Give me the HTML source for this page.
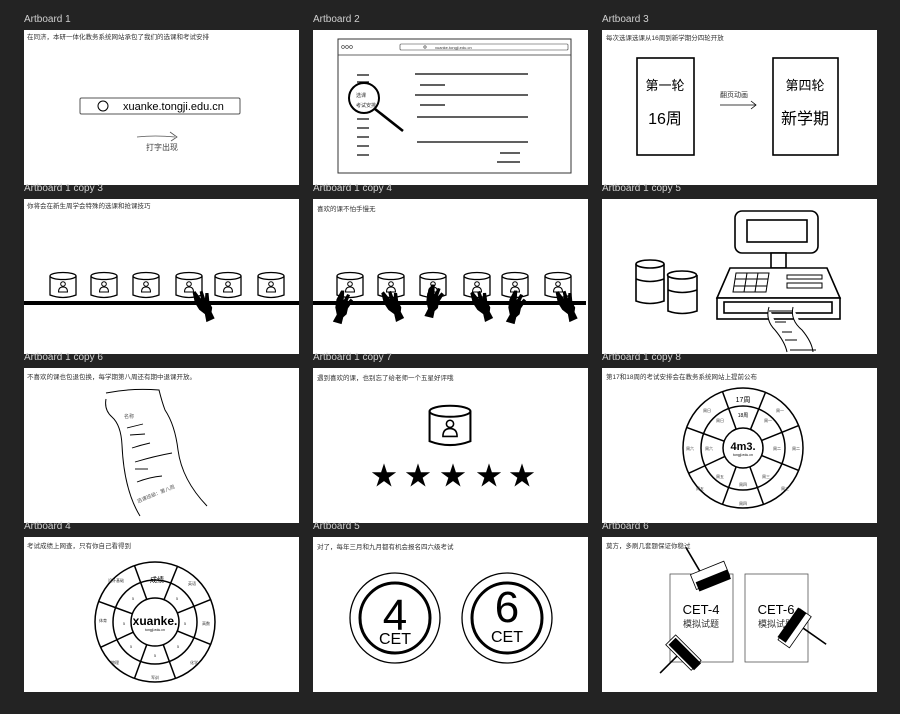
<!DOCTYPE html>
<html><head><meta charset="utf-8"><style>
html,body{margin:0;padding:0;background:#232323;}
svg{display:block;}
text{font-family:"Liberation Sans","Noto Sans CJK SC",sans-serif;}
.lbl{fill:#d0d0d0;font-size:10px;}
.cap{fill:#333;font-size:6.5px;}
</style></head><body>
<svg width="900" height="714" viewBox="0 0 900 714" xmlns="http://www.w3.org/2000/svg">
<defs>
<symbol id="cyl" viewBox="0 0 28 28" overflow="visible">
<g fill="#fff" stroke="#000" stroke-width="1.3">
<path d="M1 4 L1 23 Q14 28 27 23 L27 4"/>
<ellipse cx="14" cy="4" rx="13" ry="3.5"/>
</g>
<circle cx="14" cy="12" r="2.3" fill="none" stroke="#000" stroke-width="1"/>
<path d="M9.5 20 Q9.5 15 14 15 Q18.5 15 18.5 20 Z" fill="none" stroke="#000" stroke-width="1"/>
</symbol>
<symbol id="hand" viewBox="0 0 20 34" overflow="visible">
<path d="M3 2 L6 1 L9 10 L10 3 L13 3 L13 11 L15 6 L18 7 L16 16 L17 22 L15 26 L16 33 L7 34 L8 26 L4 20 L2 12 Z" fill="#000"/>
</symbol>
</defs>

<g fill="#fff">
<rect x="24" y="30" width="275" height="155"/><rect x="313" y="30" width="275" height="155"/><rect x="602" y="30" width="275" height="155"/>
<rect x="24" y="199" width="275" height="155"/><rect x="313" y="199" width="275" height="155"/><rect x="602" y="199" width="275" height="155"/>
<rect x="24" y="368" width="275" height="155"/><rect x="313" y="368" width="275" height="155"/><rect x="602" y="368" width="275" height="155"/>
<rect x="24" y="537" width="275" height="155"/><rect x="313" y="537" width="275" height="155"/><rect x="602" y="537" width="275" height="155"/>
</g>

<!-- Board 1 -->
<text class="cap" x="27" y="39">在同济，本研一体化教务系统网站承包了我们的选课和考试安排</text>
<rect x="80" y="98" width="160" height="16" rx="1.5" fill="none" stroke="#555" stroke-width="1"/>
<circle cx="103" cy="106" r="5" fill="none" stroke="#000" stroke-width="1"/>
<text x="123" y="110" font-size="11" fill="#000">xuanke.tongji.edu.cn</text>
<path d="M137 137 Q155 135 175 137 M170 132 L177 137 L171 141" fill="none" stroke="#555" stroke-width="0.8"/>
<text x="146" y="150" font-size="8" fill="#444">打字出现</text>

<!-- Board 2 -->
<rect x="338" y="39" width="233" height="134" fill="none" stroke="#333" stroke-width="1"/>
<line x1="338" y1="55" x2="571" y2="55" stroke="#333" stroke-width="0.8"/>
<g fill="none" stroke="#333" stroke-width="0.6"><circle cx="343" cy="47" r="1.4"/><circle cx="347" cy="47" r="1.4"/><circle cx="351" cy="47" r="1.4"/>
<rect x="400" y="44" width="168" height="6" rx="1"/><circle cx="425" cy="47" r="1.2"/></g>
<text x="435" y="49" font-size="4" fill="#333">xuanke.tongji.edu.cn</text>
<g stroke="#000" stroke-width="1.2">
<line x1="357" y1="75" x2="369" y2="75"/><line x1="357" y1="82" x2="369" y2="82"/>
<line x1="357" y1="119" x2="369" y2="119"/><line x1="357" y1="128" x2="369" y2="128"/><line x1="357" y1="137" x2="369" y2="137"/><line x1="357" y1="146" x2="369" y2="146"/><line x1="357" y1="155" x2="369" y2="155"/>
<line x1="415" y1="74" x2="528" y2="74"/><line x1="420" y1="85" x2="445" y2="85"/><line x1="415" y1="95" x2="528" y2="95"/><line x1="420" y1="105" x2="445" y2="105"/><line x1="417" y1="117" x2="528" y2="117"/><line x1="417" y1="142" x2="528" y2="142"/><line x1="500" y1="153" x2="520" y2="153"/><line x1="497" y1="162" x2="520" y2="162"/>
</g>
<circle cx="364" cy="98" r="15" fill="none" stroke="#000" stroke-width="2"/>
<line x1="375" y1="109" x2="403" y2="131" stroke="#000" stroke-width="2.6"/>
<text x="356" y="97" font-size="5" fill="#333">选课</text>
<text x="356" y="107" font-size="5" fill="#333">考试安排</text>

<!-- Board 3 -->
<text class="cap" x="606" y="40">每次选课选课从16周到新学期分四轮开放</text>
<rect x="637" y="58" width="57" height="97" fill="none" stroke="#000" stroke-width="1.6"/>
<text x="665" y="90" font-size="13" text-anchor="middle" fill="#000">第一轮</text>
<text x="665" y="124" font-size="16" text-anchor="middle" fill="#000">16周</text>
<text x="720" y="97" font-size="7" fill="#333">翻页动画</text>
<path d="M720 105 L756 105 M751 101 L756 105 L751 109" fill="none" stroke="#000" stroke-width="0.8"/>
<rect x="773" y="58" width="65" height="97" fill="none" stroke="#000" stroke-width="1.6"/>
<text x="805" y="90" font-size="13" text-anchor="middle" fill="#000">第四轮</text>
<text x="805" y="124" font-size="16" text-anchor="middle" fill="#000">新学期</text>

<!-- Board 4 -->
<text class="cap" x="27" y="208">你将会在新生周学会特殊的选课和抢课技巧</text>
<use href="#cyl" x="49" y="272" width="28" height="28"/><use href="#cyl" x="90" y="272" width="28" height="28"/><use href="#cyl" x="132" y="272" width="28" height="28"/>
<use href="#cyl" x="175" y="272" width="28" height="28"/><use href="#cyl" x="214" y="272" width="28" height="28"/><use href="#cyl" x="257" y="272" width="28" height="28"/>
<rect x="24" y="301" width="275" height="4" fill="#000"/>
<use href="#hand" x="194" y="288" width="20" height="34" transform="rotate(-18 204 305)"/>

<!-- Board 5 -->
<text class="cap" x="317" y="211">喜欢的课不怕手慢无</text>
<use href="#cyl" x="336" y="272" width="28" height="28"/><use href="#cyl" x="377" y="272" width="28" height="28"/><use href="#cyl" x="419" y="272" width="28" height="28"/>
<use href="#cyl" x="463" y="272" width="28" height="28"/><use href="#cyl" x="501" y="272" width="28" height="28"/><use href="#cyl" x="544" y="272" width="28" height="28"/>
<rect x="313" y="301" width="273" height="4" fill="#000"/>
<use href="#hand" x="332" y="290" width="20" height="34" transform="rotate(22 342 307)"/>
<use href="#hand" x="383" y="288" width="20" height="34" transform="rotate(-20 393 305)"/>
<use href="#hand" x="422" y="284" width="22" height="34" transform="rotate(20 433 301)"/>
<use href="#hand" x="472" y="288" width="20" height="34" transform="rotate(-20 482 305)"/>
<use href="#hand" x="505" y="290" width="20" height="34" transform="rotate(22 515 307)"/>
<use href="#hand" x="557" y="288" width="20" height="34" transform="rotate(-18 567 305)"/>

<!-- Board 6 -->
<g fill="#fff" stroke="#000" stroke-width="1.6">
<path d="M636 264 L636 301 Q650 306 664 301 L664 264"/><ellipse cx="650" cy="264" rx="14" ry="4"/><path d="M636 279 Q650 284 664 279"/>
<path d="M668 275 L668 311 Q682 316 697 311 L697 275"/><ellipse cx="682" cy="275" rx="14.5" ry="4"/><path d="M668 290 Q682 295 697 290"/>
<rect x="735" y="211" width="83" height="42" rx="7"/>
<rect x="747" y="220" width="60" height="22"/>
<rect x="771" y="253" width="15" height="15"/>
<path d="M730 268 L827 268 L840 298 L717 298 Z"/>
<rect x="717" y="298" width="123" height="21"/>
<rect x="724" y="302" width="108" height="11"/>
</g>
<g fill="none" stroke="#000" stroke-width="1">
<path d="M736 273 L769 273 L766 292 L733 292 Z M735 279 L768 279 M734 286 L767 286 M747 273 L744 292 M758 273 L755 292"/>
<rect x="787" y="275" width="35" height="4"/><rect x="787" y="283" width="35" height="5"/>
</g>
<path d="M769 307 Q765 320 775 330 Q785 342 787 352 M793 307 Q790 320 802 330 Q812 342 813 352 M769 311 L793 311 M775 322 L786 322 M782 332 L792 332 M785 340 L797 340 M790 350 L816 350" fill="#fff" stroke="#000" stroke-width="1"/>

<!-- Board 7 -->
<text class="cap" x="27" y="379">不喜欢的课也包退包换，每学期第八周还有期中退课开放。</text>
<path d="M106 393 Q130 388 159 390 Q162 402 165 410 Q175 425 178 450 Q182 480 207 506 M106 399 Q104 410 112 417 Q121 425 122 445 Q124 490 140 516" fill="none" stroke="#000" stroke-width="1"/>
<g stroke="#000" stroke-width="0.9" fill="none">
<path d="M127 428 Q135 426 143 424"/><path d="M130 435 L145 434"/><path d="M132 448 Q141 445 150 443"/><path d="M135 462 Q155 456 172 453"/><path d="M135 469 L148 469"/><path d="M137 482 Q150 477 162 476"/>
</g>
<text x="124" y="418" font-size="5" fill="#555">名称</text>
<text x="138" y="503" font-size="5" fill="#555" transform="rotate(-22 138 503)">选课班级：第八周</text>

<!-- Board 8 -->
<text class="cap" x="317" y="380">遇到喜欢的课，也别忘了给老师一个五星好评哦</text>
<use href="#cyl" x="428" y="405" width="44" height="44"/>
<g fill="#000" font-size="26" text-anchor="middle">
<text x="384" y="485">★</text><text x="418" y="485">★</text><text x="453" y="485">★</text><text x="489" y="485">★</text><text x="522" y="485">★</text>
</g>

<!-- Board 9 -->
<text class="cap" x="606" y="379">第17和18周的考试安排会在教务系统网站上提前公布</text>
<g transform="translate(743 448)" fill="none" stroke="#000" stroke-width="1.5">
<circle r="60"/><circle r="42"/><circle r="20"/>
<line y1="-42" y2="-60" transform="rotate(-20)"/><line y1="-42" y2="-60" transform="rotate(22)"/><line y1="-42" y2="-60" transform="rotate(68)"/><line y1="-42" y2="-60" transform="rotate(112)"/><line y1="-42" y2="-60" transform="rotate(160)"/><line y1="-42" y2="-60" transform="rotate(200)"/><line y1="-42" y2="-60" transform="rotate(245)"/><line y1="-42" y2="-60" transform="rotate(290)"/>
<line y1="-20" y2="-42" transform="rotate(-20)"/><line y1="-20" y2="-42" transform="rotate(22)"/><line y1="-20" y2="-42" transform="rotate(68)"/><line y1="-20" y2="-42" transform="rotate(112)"/><line y1="-20" y2="-42" transform="rotate(160)"/><line y1="-20" y2="-42" transform="rotate(200)"/><line y1="-20" y2="-42" transform="rotate(245)"/><line y1="-20" y2="-42" transform="rotate(290)"/>
</g>
<text x="743" y="402" font-size="7" text-anchor="middle" fill="#000">17周</text>
<text x="743" y="417" font-size="5" text-anchor="middle" fill="#000">18周</text>
<text x="743" y="450" font-size="11" font-weight="bold" text-anchor="middle" fill="#000">4m3.</text>
<text x="743" y="456" font-size="3.5" text-anchor="middle" fill="#000">tongji.edu.cn</text>
<g font-size="4" fill="#333" text-anchor="middle">
<text x="707" y="412">周日</text><text x="780" y="412">周一</text><text x="796" y="450">周二</text><text x="690" y="450">周六</text><text x="700" y="490">周五</text><text x="785" y="490">周三</text><text x="743" y="505">周四</text>
<text x="720" y="422">周日</text><text x="768" y="422">周一</text><text x="777" y="450">周二</text><text x="709" y="450">周六</text><text x="720" y="478">周五</text><text x="766" y="478">周三</text><text x="743" y="486">周四</text>
</g>

<!-- Board 10 -->
<text class="cap" x="27" y="548">考试成绩上网查，只有你自己看得到</text>
<g transform="translate(155 622)" fill="none" stroke="#000" stroke-width="1.5">
<circle r="60"/><circle r="42"/><circle r="24"/>
<line y1="-42" y2="-60" transform="rotate(-20)"/><line y1="-42" y2="-60" transform="rotate(22)"/><line y1="-42" y2="-60" transform="rotate(68)"/><line y1="-42" y2="-60" transform="rotate(112)"/><line y1="-42" y2="-60" transform="rotate(160)"/><line y1="-42" y2="-60" transform="rotate(200)"/><line y1="-42" y2="-60" transform="rotate(245)"/><line y1="-42" y2="-60" transform="rotate(290)"/>
<line y1="-24" y2="-42" transform="rotate(-20)"/><line y1="-24" y2="-42" transform="rotate(22)"/><line y1="-24" y2="-42" transform="rotate(68)"/><line y1="-24" y2="-42" transform="rotate(112)"/><line y1="-24" y2="-42" transform="rotate(160)"/><line y1="-24" y2="-42" transform="rotate(200)"/><line y1="-24" y2="-42" transform="rotate(245)"/><line y1="-24" y2="-42" transform="rotate(290)"/>
</g>
<text x="157" y="582" font-size="7" text-anchor="middle" fill="#000">成绩</text>
<text x="155" y="625" font-size="12" font-weight="bold" text-anchor="middle" fill="#000">xuanke.</text>
<text x="155" y="631" font-size="3.5" text-anchor="middle" fill="#000">tongji.edu.cn</text>
<g font-size="4" fill="#333" text-anchor="middle">
<text x="116" y="582">设计基础</text><text x="192" y="585">英语</text><text x="206" y="625">高数</text><text x="103" y="622">体育</text><text x="115" y="664">物理</text><text x="194" y="664">化学</text><text x="155" y="679">军训</text>
<text x="133" y="600">5</text><text x="177" y="600">5</text><text x="185" y="625">5</text><text x="124" y="625">5</text><text x="131" y="648">5</text><text x="178" y="648">5</text><text x="155" y="657">5</text>
</g>

<!-- Board 11 -->
<text class="cap" x="317" y="549">对了，每年三月和九月都有机会报名四六级考试</text>
<g fill="none" stroke="#000">
<circle cx="395" cy="618" r="45" stroke-width="1.3"/><circle cx="395" cy="618" r="35" stroke-width="3"/>
<circle cx="507" cy="618" r="45" stroke-width="1.3"/><circle cx="507" cy="618" r="35" stroke-width="3"/>
</g>
<text x="395" y="630" font-size="44" text-anchor="middle" fill="#000">4</text>
<text x="395" y="644" font-size="16" text-anchor="middle" fill="#000">CET</text>
<text x="507" y="622" font-size="44" text-anchor="middle" fill="#000">6</text>
<text x="507" y="642" font-size="16" text-anchor="middle" fill="#000">CET</text>

<!-- Board 12 -->
<text class="cap" x="606" y="548">莫方，多刷几套题保证你稳过</text>
<rect x="670" y="574" width="63" height="88" fill="none" stroke="#555" stroke-width="0.8"/>
<rect x="745" y="574" width="63" height="88" fill="none" stroke="#555" stroke-width="0.8"/>
<text x="701" y="614" font-size="13" text-anchor="middle" fill="#000">CET-4</text>
<text x="701" y="627" font-size="9" text-anchor="middle" fill="#333">模拟试题</text>
<text x="776" y="614" font-size="13" text-anchor="middle" fill="#000">CET-6</text>
<text x="776" y="627" font-size="9" text-anchor="middle" fill="#333">模拟试题</text>
<g transform="rotate(-22 712 580)">
<rect x="694" y="567" width="36" height="16" fill="#fff" stroke="#000" stroke-width="0.8"/>
<rect x="696" y="576" width="34" height="10" fill="#000"/>
<line x1="704" y1="567" x2="700" y2="540" stroke="#000" stroke-width="1.6"/>
</g>
<g transform="rotate(45 682 654)">
<rect x="664" y="645" width="36" height="14" fill="#fff" stroke="#000" stroke-width="0.8"/>
<rect x="666" y="647" width="36" height="10" fill="#000"/>
<line x1="680" y1="659" x2="680" y2="683" stroke="#000" stroke-width="1.6"/>
</g>
<g transform="rotate(-55 796 628)">
<rect x="776" y="620" width="38" height="14" fill="#fff" stroke="#000" stroke-width="0.8"/>
<rect x="778" y="618" width="36" height="10" fill="#000"/>
<line x1="800" y1="634" x2="800" y2="662" stroke="#000" stroke-width="1.6"/>
</g>

<g class="lbl">
<text x="24" y="22">Artboard 1</text><text x="313" y="22">Artboard 2</text><text x="602" y="22">Artboard 3</text>
<text x="24" y="191">Artboard 1 copy 3</text><text x="313" y="191">Artboard 1 copy 4</text><text x="602" y="191">Artboard 1 copy 5</text>
<text x="24" y="360">Artboard 1 copy 6</text><text x="313" y="360">Artboard 1 copy 7</text><text x="602" y="360">Artboard 1 copy 8</text>
<text x="24" y="529">Artboard 4</text><text x="313" y="529">Artboard 5</text><text x="602" y="529">Artboard 6</text>
</g>
</svg>
</body></html>
